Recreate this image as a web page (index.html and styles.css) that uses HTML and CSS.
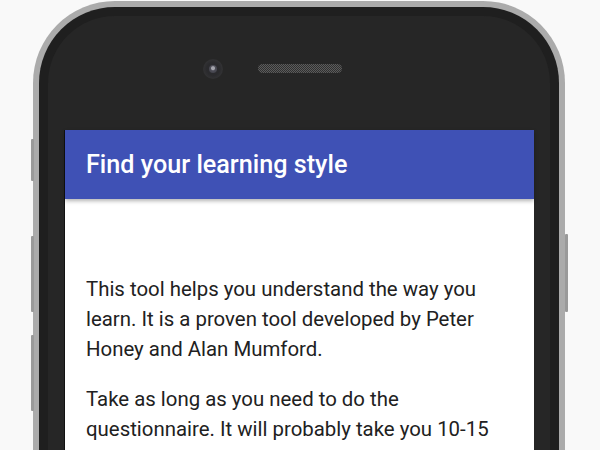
FILE: index.html
```html
<!DOCTYPE html>
<html>
<head>
<meta charset="utf-8">
<link rel="stylesheet" href="styles.css">
</head>
<body>
<div class="stage">
  <div class="phone">
    <span class="btn btn-l1"></span>
    <span class="btn btn-l2"></span>
    <span class="btn btn-l3"></span>
    <span class="btn btn-r1"></span>
    <div class="bezel">
      <div class="bezel-inner">
        <div class="head">
          <span class="camera"><span class="lens"></span></span>
          <span class="speaker"></span>
          <span></span>
        </div>
        <div class="screen">
          <header class="appbar">
            <h1 class="title">Find your learning style</h1>
          </header>
          <main class="content">
            <p>This tool helps you understand the way you learn. It is a proven tool developed by Peter Honey and Alan Mumford.</p>
            <p>Take as long as you need to do the questionnaire. It will probably take you 10-15 minutes.</p>
          </main>
        </div>
      </div>
    </div>
  </div>
</div>
</body>
</html>
```
FILE: styles.css
```css
html, body {
  margin: 0;
  padding: 0;
  height: 100%;
  overflow: hidden;
  background: #f9f9f9;
  font-family: Roboto, "Liberation Sans", sans-serif;
}
.stage {
  padding: 1px 0 0 33px;
}
.phone {
  position: relative;
  width: 532px;
  height: 900px;
  box-sizing: border-box;
  padding: 6px;
  border-radius: 82px;
  background: #ababab;
}
.btn {
  position: absolute;
  width: 3px;
  background: #9a9a9a;
  border-radius: 1px;
}
.btn-l1 { left: -2px; top: 138px; height: 42px; }
.btn-l2 { left: -2px; top: 235px; height: 76px; }
.btn-l3 { left: -2px; top: 334px; height: 76px; }
.btn-r1 { right: -3px; top: 233px; height: 78px; }
.bezel {
  height: 100%;
  box-sizing: border-box;
  padding: 9px;
  border-radius: 76px;
  background: #1f1f1f;
}
.bezel-inner {
  height: 100%;
  box-sizing: border-box;
  padding: 0 14px 0 16px;
  border-radius: 67px;
  background: #262626;
}
.head {
  height: 114px;
  display: grid;
  grid-template-columns: 1fr auto 1fr;
  align-items: start;
  padding-top: 48px;
  box-sizing: border-box;
}
.camera {
  justify-self: end;
  margin-right: 35px;
  margin-top: -5px;
  width: 20px;
  height: 20px;
  border-radius: 50%;
  background: radial-gradient(circle, #2a2a2d 45%, #313133 65%, #262626 100%);
  display: flex;
  align-items: center;
  justify-content: center;
}
.lens {
  width: 8px;
  height: 8px;
  border-radius: 50%;
  background: radial-gradient(circle at 50% 40%, #a4a4ac 0 1.5px, #4e4e58 2.5px, #3a3a42 100%);
}
.speaker {
  width: 84px;
  height: 9px;
  border-radius: 5px;
  background: repeating-conic-gradient(#5c5c5c 0 25%, #303030 0 50%) 0 0 / 2px 2px;
}
.screen {
  width: 470px;
  height: 700px;
  background: #fff;
  border-left: 1px solid #111;
  box-sizing: border-box;
}
.appbar {
  position: relative;
  z-index: 1;
  height: 69px;
  background: #3f51b5;
  display: flex;
  align-items: center;
  padding-left: 21px;
  box-shadow: 0 2px 4px rgba(0, 0, 0, 0.3);
}
.title {
  margin: 0;
  color: #fff;
  font-size: 25.2px;
  font-weight: 500;
}
.content {
  padding: 75px 20px 0 21px;
}
.content p {
  margin: 0 0 20px;
  font-size: 20.4px;
  line-height: 30px;
  color: #212121;
}
```
